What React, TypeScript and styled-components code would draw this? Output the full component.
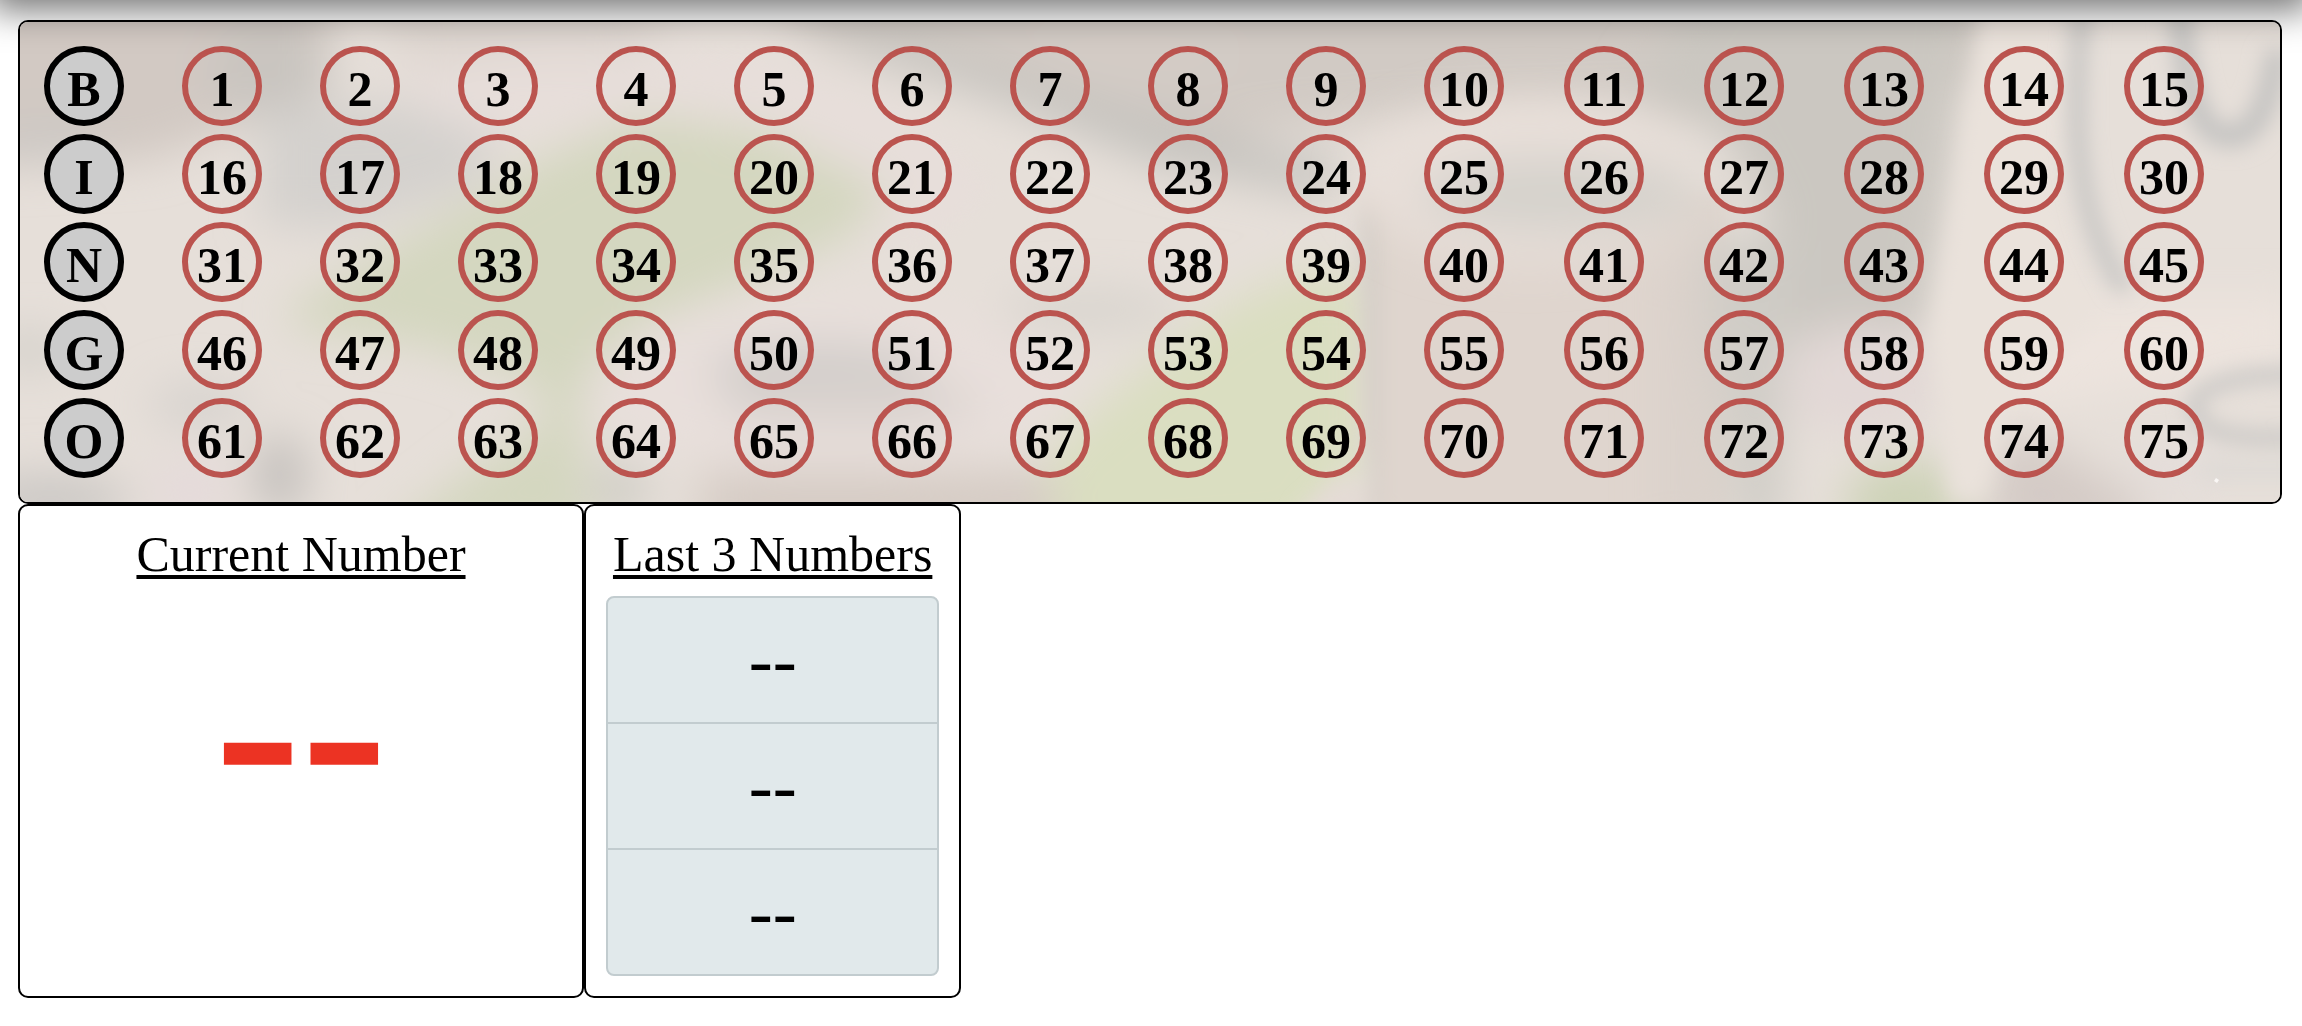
import React from "react";
import styled, { createGlobalStyle } from "styled-components";

const LETTERS = ["B", "I", "N", "G", "O"];
const PER_ROW = 15;
const recent = ["--", "--", "--"];

const GlobalStyle = createGlobalStyle`
  * { box-sizing: border-box; }
  body {
    margin: 0;
    background: #fff;
    color: #000;
    font-family: "Liberation Serif", "Times New Roman", serif;
  }
`;

const TopBar = styled.header`
  position: relative;
  z-index: 1;
  height: 60px;
  margin-top: -60px;
  background: #fff;
  box-shadow: 0 0 36px 10px rgba(0, 0, 0, 0.55);
  pointer-events: none;
`;

const Page = styled.main`
  padding: 20px 20px 28px 18px;
`;

const Board = styled.section`
  position: relative;
  overflow: hidden;
  padding: 20px;
  border: 2px solid #000;
  border-radius: 10px;
  background: #e6dfd9;
`;

const Backdrop = styled.svg`
  position: absolute;
  inset: 0;
  width: 100%;
  height: 100%;
`;

const Grid = styled.table`
  position: relative;
  display: block;
  border-collapse: collapse;
`;

const GridBody = styled.tbody`
  display: block;
`;

const GridRow = styled.tr`
  display: grid;
  grid-template-columns: repeat(10, 69fr) repeat(6, 70fr);
`;

const LetterCell = styled.th`
  padding: 4px;
`;

const NumberCell = styled.td`
  padding: 4px;
`;

const Ball = styled.span<{ $letter?: boolean }>`
  display: block;
  width: 80px;
  height: 80px;
  padding-top: 6px;
  border: 6px solid ${(p) => (p.$letter ? "#000" : "#bb544f")};
  border-radius: 50%;
  background: ${(p) => (p.$letter ? "#ccc" : "transparent")};
  font-size: 50px;
  font-weight: bold;
  line-height: 62px;
  text-align: center;
`;

const Panels = styled.div`
  display: grid;
  grid-template-columns: repeat(12, 1fr);
`;

const Panel = styled.section<{ $span: number }>`
  grid-column: span ${(p) => p.$span};
  padding: 20px;
  border: 2px solid #000;
  border-radius: 10px;
  text-align: center;
`;

const Title = styled.h2`
  margin: 0 0 14px;
  font-size: 50px;
  font-weight: normal;
  line-height: 56px;
  white-space: nowrap;
  text-decoration: underline;
  text-decoration-thickness: 4px;
  text-underline-offset: 4px;
`;

const Current = styled.div`
  color: #ec3323;
  font-size: 260px;
  font-weight: bold;
  line-height: 262px;
`;

const Recent = styled.ol`
  margin: 0;
  padding: 0;
  list-style: none;
  border: 2px solid #c2cccf;
  border-radius: 8px;
  background: #e1e9eb;
`;

const RecentItem = styled.li`
  font-size: 72px;
  line-height: 124px;

  & + & {
    border-top: 2px solid #c2cccf;
  }
`;

function BoardBackdrop() {
  return (
    <Backdrop viewBox="20 22 2260 480" preserveAspectRatio="none" aria-hidden="true">
      <defs>
        <filter id="soft" x="-30%" y="-30%" width="160%" height="160%">
          <feGaussianBlur stdDeviation="22" />
        </filter>
        <filter id="edge" x="-30%" y="-30%" width="160%" height="160%">
          <feGaussianBlur stdDeviation="10" />
        </filter>
      </defs>
      <rect x="20" y="22" width="2260" height="480" fill="#e6dfd9" />
      <g filter="url(#soft)">
        <path d="M-60 -60H330V80L230 130L150 160L-60 170Z" fill="#d2c9c3" />
        <ellipse cx="270" cy="70" rx="60" ry="50" fill="#c9c5c0" />
        <path d="M320 -40H700L640 50L420 70Z" fill="#ddd5cf" />
        <path d="M380 70L560 50L780 60L900 110L1000 190L900 250L760 120L600 130L440 130Z" fill="#e7deda" />
        <ellipse cx="50" cy="140" rx="60" ry="18" fill="#cbc8c4" />
        <path d="M260 110L400 100L500 140L470 190L340 230L260 225Z" fill="#d4d1ce" />
        <ellipse cx="30" cy="350" rx="40" ry="18" fill="#d2cfc9" />
        <ellipse cx="200" cy="405" rx="50" ry="22" fill="#d6d2ce" />
        <ellipse cx="280" cy="475" rx="26" ry="40" fill="#c3bfbc" />
        <ellipse cx="50" cy="500" rx="80" ry="26" fill="#cbc8c5" />
        <ellipse cx="190" cy="490" rx="40" ry="34" fill="#e5dada" />
        <path d="M285 310L420 230L560 150L640 115L760 130L890 190L850 235L730 290L650 320L580 390L590 540H380L470 470L550 420L530 380L420 345L300 330Z" fill="#d4d7c0" />
        <ellipse cx="620" cy="490" rx="30" ry="30" fill="#d0cec6" />
        <path d="M730 -40H2000V80L1700 110L1400 120L1200 140L1000 100L820 45Z" fill="#d1cac4" />
        <path d="M790 20L900 40L1060 90L1200 130L1360 170L1320 195L1160 165L1010 105L880 60Z" fill="#c4c2be" />
        <ellipse cx="1130" cy="55" rx="110" ry="22" fill="#d4ccc6" />
        <ellipse cx="830" cy="385" rx="240" ry="88" fill="#e8dfdb" />
        <ellipse cx="820" cy="372" rx="110" ry="28" fill="#d0ccc9" />
        <ellipse cx="850" cy="405" rx="130" ry="24" fill="#dad3cf" />
        <path d="M700 470H1060V540H700Z" fill="#d6ccc5" />
        <ellipse cx="1090" cy="310" rx="90" ry="20" fill="#d8d4ce" />
        <path d="M1060 560L1050 450L1130 380L1220 310L1300 270L1370 280L1370 450L1310 540Z" fill="#dadec1" />
      </g>
      <g filter="url(#edge)">
        <path d="M1362 190H1730V540H1390L1362 440Z" fill="#dfd5ce" />
        <path d="M1358 210H1380V540H1372Z" fill="#d4cec7" />
        <path d="M1300 510L1340 476L1370 490V530H1300Z" fill="#e4dbd5" />
      </g>
      <g filter="url(#soft)">
        <path d="M1630 90L1720 -40H1975L1950 180L1925 330L1860 350L1770 340L1730 330L1770 220L1720 130Z" fill="#cbc7c1" />
        <path d="M1700 240H1790L1780 540H1740Z" fill="#cfccc6" />
        <path d="M1660 260H1710V540H1660Z" fill="#dad1cb" />
        <ellipse cx="1530" cy="180" rx="172" ry="82" fill="#e8dfd9" />
        <ellipse cx="1560" cy="195" rx="140" ry="38" fill="#d5d2cc" />
        <ellipse cx="1860" cy="380" rx="80" ry="56" fill="#e2d8d6" />
        <ellipse cx="1905" cy="505" rx="60" ry="46" fill="#ced3b8" />
        <path d="M2000 430L2060 450L2140 500V540H1985Z" fill="#d4cbc6" />
        <ellipse cx="2180" cy="470" rx="50" ry="26" fill="#e4ddda" />
        <path d="M1990 300H2300V360L2060 400L2000 420Z" fill="#ede4de" />
      </g>
      <g filter="url(#edge)">
        <path d="M1985 -20H2062L2056 200L2100 320L2010 400L1985 500H1950L1932 330L1955 180Z" fill="#eae2db" />
      </g>
      <g filter="url(#edge)" fill="none" stroke="#c6c5c3">
        <path d="M2085 -20C2072 110 2070 210 2125 290" strokeWidth="16" />
        <path d="M2178 -20C2184 100 2200 136 2230 136S2272 90 2278 50" strokeWidth="24" />
        <path d="M2310 375C2230 372 2188 390 2195 412S2240 442 2310 436" strokeWidth="13" />
        <path d="M2200 470H2310" stroke="#dedad6" strokeWidth="20" />
      </g>
      <path d="M2216 478l3 2-2 3-3-2Z" fill="#faf7f5" />
    </Backdrop>
  );
}

export default function App() {
  return (
    <>
      <GlobalStyle />
      <TopBar />
      <Page>
        <Board>
          <BoardBackdrop />
          <Grid>
            <GridBody>
              {LETTERS.map((letter, row) => (
                <GridRow key={letter}>
                  <LetterCell scope="row">
                    <Ball $letter>{letter}</Ball>
                  </LetterCell>
                  {Array.from({ length: PER_ROW }, (_, i) => row * PER_ROW + i + 1).map((n) => (
                    <NumberCell key={n}>
                      <Ball>{n}</Ball>
                    </NumberCell>
                  ))}
                </GridRow>
              ))}
            </GridBody>
          </Grid>
        </Board>
        <Panels>
          <Panel $span={3}>
            <Title>Current Number</Title>
            <Current>--</Current>
          </Panel>
          <Panel $span={2}>
            <Title>Last 3 Numbers</Title>
            <Recent>
              {recent.map((value, i) => (
                <RecentItem key={i}>{value}</RecentItem>
              ))}
            </Recent>
          </Panel>
        </Panels>
      </Page>
    </>
  );
}
